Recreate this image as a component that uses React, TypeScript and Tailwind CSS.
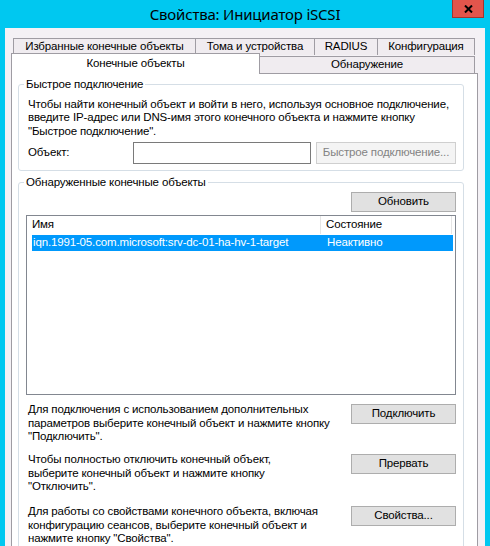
import React from 'react';

const TOP_TABS = [
  { label: 'Избранные конечные объекты', w: 'w-[182px]' },
  { label: 'Тома и устройства', w: 'w-[119px]' },
  { label: 'RADIUS', w: 'w-[63px]' },
  { label: 'Конфигурация', w: 'w-[98px]' },
];

const ACTIONS = [
  {
    lines: ['Для подключения с использованием дополнительных', 'параметров выберите конечный объект и нажмите кнопку', '"Подключить".'],
    button: 'Подключить',
    mt: 'mt-[8px]',
  },
  {
    lines: ['Чтобы полностью отключить конечный объект,', 'выберите конечный объект и нажмите кнопку', '"Отключить".'],
    button: 'Прервать',
    mt: 'mt-[9.5px]',
  },
  {
    lines: ['Для работы со свойствами конечного объекта, включая', 'конфигурацию сеансов, выберите конечный объект и', 'нажмите кнопку "Свойства".'],
    button: 'Свойства...',
    mt: 'mt-[11.5px]',
  },
];

function Button({ children, className = '' }: { children: React.ReactNode; className?: string }) {
  return (
    <div className={`w-[105px] h-[20px] shrink-0 flex items-center justify-center border border-[#adadad] bg-[#e1e1e1] text-black whitespace-nowrap ${className}`}>
      {children}
    </div>
  );
}

function Lines({ lines, className = '' }: { lines: string[]; className?: string }) {
  return (
    <div className={`leading-[13.5px] whitespace-nowrap ${className}`}>
      {lines.map((l) => (
        <div key={l}>{l}</div>
      ))}
    </div>
  );
}

export default function App() {
  return (
    <div className="w-[490px] h-[546px] overflow-hidden bg-[#00c8f0] flex flex-col font-['Liberation_Sans',Arial,sans-serif] text-[11.5px] tracking-[-0.15px] text-black">
      {/* Title bar */}
      <div className="h-[28px] shrink-0 grid grid-cols-[38px_1fr_38px]">
        <div />
        <div className="flex items-center justify-center text-[15px] leading-none font-['Noto_Sans',sans-serif] tracking-[-0.2px]">
          Свойства: Инициатор iSCSI
        </div>
        <div className="w-[32px] h-[18px] bg-[#e2554c] border border-[#a3352e] border-t-0 flex items-center justify-center">
          <svg width="9" height="8" viewBox="0 0 9 8">
            <path d="M1 0.5 L8 7.5 M8 0.5 L1 7.5" stroke="#000" strokeWidth="2" />
          </svg>
        </div>
      </div>

      {/* Window body */}
      <div className="flex-1 mx-[5px] bg-[#f4f1f5] pt-[10px] flex flex-col">
        {/* Tab row 1 */}
        <div className="flex ml-[8px] h-[17px]">
          {TOP_TABS.map((t, i) => (
            <div
              key={t.label}
              className={`${t.w} h-[17px] flex items-center justify-center whitespace-nowrap border-t border-l border-[#9f9ca3] bg-[#f0ecf0] ${i === TOP_TABS.length - 1 ? 'border-r' : ''}`}
            >
              {t.label}
            </div>
          ))}
        </div>

        {/* Tab row 2 */}
        <div className="flex items-start -mt-[2px] ml-[6px] relative z-10">
          <div className="w-[249px] h-[21px] bg-white border-t border-l border-r border-[#9f9ca3] flex items-center justify-center pb-[1px]">
            Конечные объекты
          </div>
          <div className="mt-[3px] w-[215px] h-[17px] bg-[#f0ecf0] border-t border-r border-[#9f9ca3] flex items-center justify-center">
            Обнаружение
          </div>
        </div>

        {/* Panel */}
        <div className="-mt-[1px] ml-[6px] w-[467px] flex-1 bg-white border border-[#9f9ca3] pl-[6px] pt-[2px]">
          {/* Quick connect */}
          <fieldset className="w-[446px] border border-[#d5dee6] rounded-[3px] pl-[9px] pr-[6px] pb-[6px]">
            <legend className="-ml-[4px] px-[2px] leading-[16px]">Быстрое подключение</legend>
            <Lines
              className="mt-[5.5px]"
              lines={[
                'Чтобы найти конечный объект и войти в него, используя основное подключение,',
                'введите IP-адрес или DNS-имя этого конечного объекта и нажмите кнопку',
                '"Быстрое подключение".',
              ]}
            />
            <div className="mt-[4px] flex items-center h-[22px]">
              <div className="w-[105px]">Объект:</div>
              <div className="w-[178px] h-[22px] border border-[#7a7a7a] bg-white" />
              <div className="ml-[5px] w-[140px] h-[22px] border border-[#cfcfcf] bg-[#f4f4f4] text-[#838383] whitespace-nowrap flex items-center justify-center">
                Быстрое подключение...
              </div>
            </div>
          </fieldset>

          {/* Discovered targets */}
          <fieldset className="mt-[3px] w-[446px] border border-[#d5dee6] rounded-[3px] px-[7px] pb-[20px]">
            <legend className="-ml-[2px] px-[2px] leading-[16px]">Обнаруженные конечные объекты</legend>
            <div className="mt-[2px] flex justify-end">
              <Button>Обновить</Button>
            </div>

            <div className="mt-[3px] w-[430px] h-[180px] border border-[#828790] bg-white">
              <div className="h-[18px] flex">
                <div className="w-[294px] border-r border-[#e5e5e5] pl-[5px] flex items-center">Имя</div>
                <div className="w-[131px] border-r border-[#e5e5e5] pl-[5px] flex items-center">Состояние</div>
              </div>
              <div className="mt-[1px] ml-[5px] w-[421px] h-[16px] bg-[#0099fc] text-white flex items-center whitespace-nowrap">
                <div className="w-[289px] pl-[1px]">iqn.1991-05.com.microsoft:srv-dc-01-ha-hv-1-target</div>
                <div className="pl-[6px]">Неактивно</div>
              </div>
            </div>

            {ACTIONS.map((a) => (
              <div key={a.button} className={`${a.mt} flex justify-between items-start`}>
                <Lines className="ml-[2px]" lines={a.lines} />
                <Button className="mt-[1px]">{a.button}</Button>
              </div>
            ))}
          </fieldset>
        </div>
      </div>
    </div>
  );
}
